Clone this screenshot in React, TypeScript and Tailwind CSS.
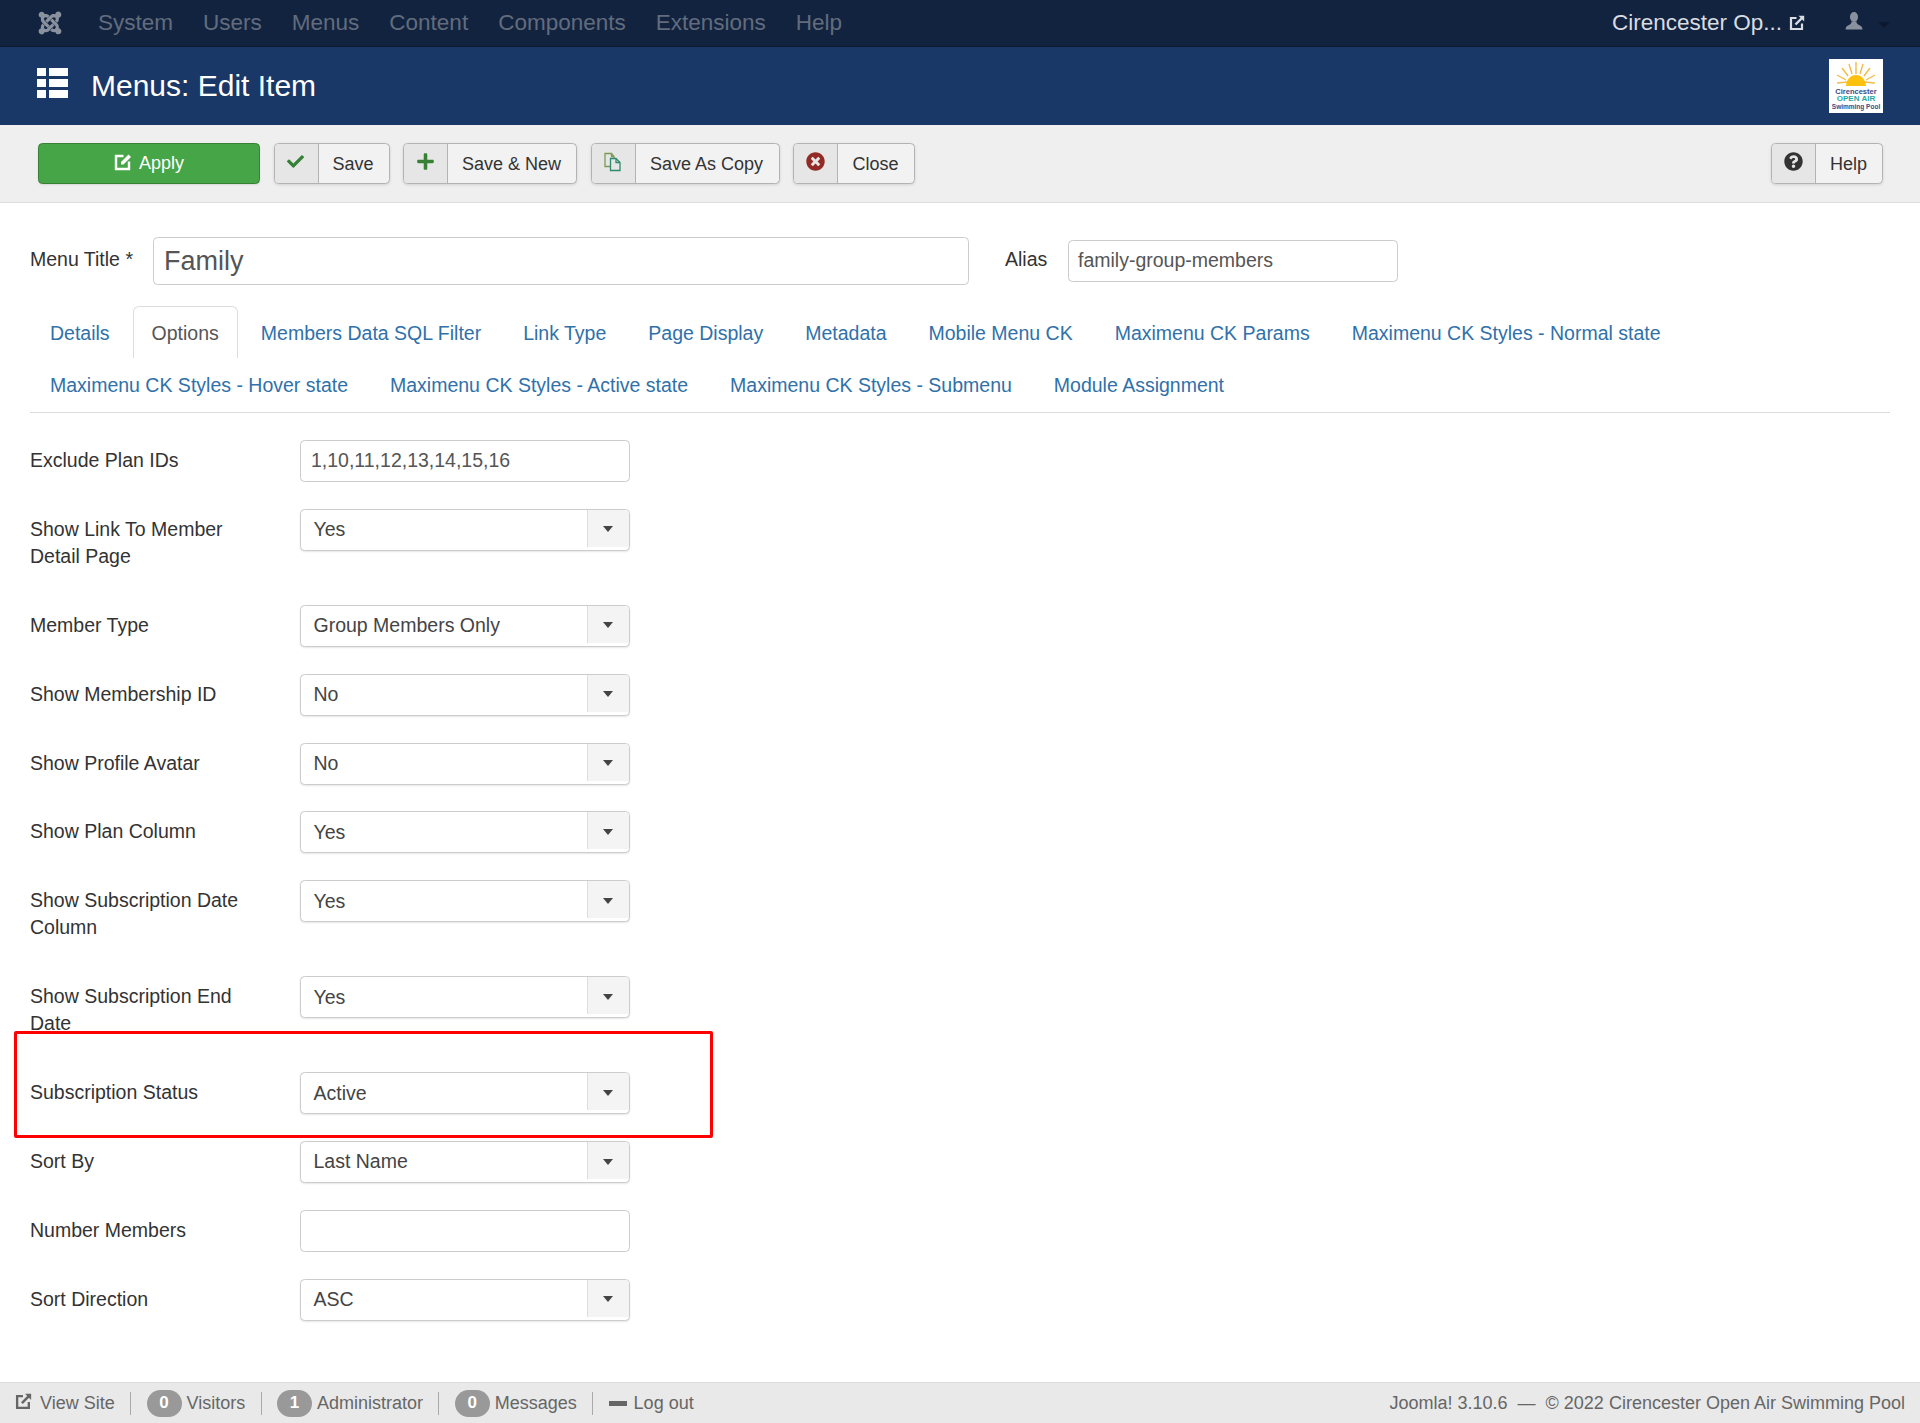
import React from "react";
import { FaJoomla, FaCheck, FaPlus, FaTimesCircle, FaQuestionCircle } from "react-icons/fa";

function ExtLink({ className }: { className?: string }) {
  return (
    <svg viewBox="0 0 16 16" className={className} fill="none" stroke="currentColor">
      <path d="M7.5 3H2v11h11V8.5" strokeWidth="2.2" />
      <path d="M6.5 9.5 13 3" strokeWidth="2.4" />
      <path d="M9.5 0.8H15.2V6.5Z" fill="currentColor" stroke="none" />
    </svg>
  );
}

function EditIcon({ className }: { className?: string }) {
  return (
    <svg viewBox="0 0 18 18" className={className} fill="none" stroke="currentColor">
      <path d="M9.5 3H2v13h13V8.5" strokeWidth="2.4" />
      <path d="M7 11.5v-2.5l7.5-7.5 2.5 2.5-7.5 7.5z" fill="currentColor" stroke="none" />
    </svg>
  );
}

function UserIcon({ className }: { className?: string }) {
  return (
    <svg viewBox="0 0 18 18" className={className} fill="currentColor">
      <ellipse cx="9" cy="5" rx="4" ry="5" />
      <path d="M6.5 9.5c0 1.5-.5 2.5-2 3.2C2.5 13.6.5 14.5.5 17.5h17c0-3-2-3.9-4-4.8-1.5-.7-2-1.7-2-3.2z" />
    </svg>
  );
}

function CopyIcon() {
  return (
    <svg viewBox="0 0 20 20" className="h-[20px] w-[20px]" fill="none" strokeWidth="1.3">
      <path d="M2 1.5h6.5l2.5 3v10H2z" stroke="#7e9a52" />
      <path d="M8.5 1.5v3H11" stroke="#7e9a52" />
      <path d="M7.5 6.5h5.5l4 4v8H7.5z" fill="#e6e6e6" stroke="#2e8a6c" />
      <path d="M13 6.5v4h4" stroke="#2e8a6c" />
    </svg>
  );
}

function ToolButton({ icon, label, w }: { icon: React.ReactNode; label: string; w: string }) {
  return (
    <button className={`flex h-[41px] items-stretch overflow-hidden rounded-[4.5px] border border-[#b3b3b3] bg-[#f2f2f2] text-[18px] leading-none text-[#333] shadow-[0_1px_3px_rgba(0,0,0,0.12)] ${w}`}>
      <span className="flex w-[44px] shrink-0 items-center justify-center border-r border-[#b3b3b3] bg-[#e6e6e6] pb-[3px] pr-[1px]">{icon}</span>
      <span className="flex flex-1 items-center justify-center pr-[1px] pt-[1px]">{label}</span>
    </button>
  );
}

function Field({ label, value, select = false }: { label: string; value?: string; select?: boolean }) {
  return (
    <div className="mb-[26.9px] flex items-start">
      <div className="w-[270px] shrink-0 pt-[7px] pb-[8px] pr-[30px] text-[19.5px] leading-[27px] text-[#333]">{label}</div>
      {select ? (
        <div className="flex h-[42px] w-[330px] items-stretch overflow-hidden rounded-[4.5px] border border-[#ccc] bg-white text-[19.5px] text-[#444] shadow-[0_1px_2px_rgba(0,0,0,0.1)]">
          <span className="flex flex-1 items-center pl-[12.5px]">{value}</span>
          <span className="mb-[3px] flex w-[42.5px] items-center justify-center border-l border-[#ddd] bg-[#f4f4f4]">
            <span className="mt-[2px] h-0 w-0 border-x-[5.5px] border-t-[6px] border-x-transparent border-t-[#444]" />
          </span>
        </div>
      ) : (
        <div className="flex h-[42px] w-[330px] items-center rounded-[4.5px] border border-[#ccc] bg-white pl-[10px] text-[19.5px] text-[#555]">{value}</div>
      )}
    </div>
  );
}

function Badge({ n }: { n: number }) {
  return <span className="flex h-[27px] w-[35px] items-center justify-center rounded-full bg-[#999] text-[17px] font-bold text-white">{n}</span>;
}
function Sep() {
  return <span className="mx-[15.4px] h-[23px] w-px bg-[#aaa]" />;
}

const row1 = ["Members Data SQL Filter", "Link Type", "Page Display", "Metadata", "Mobile Menu CK", "Maximenu CK Params", "Maximenu CK Styles - Normal state"];
const row2 = ["Maximenu CK Styles - Hover state", "Maximenu CK Styles - Active state", "Maximenu CK Styles - Submenu", "Module Assignment"];
const nav = ["System", "Users", "Menus", "Content", "Components", "Extensions", "Help"];

function Tab({ label, active = false }: { label: string; active?: boolean }) {
  return (
    <a className={`mr-[4px] block rounded-t-[6px] border border-b-0 px-[18px] pt-[13px] pb-[11px] leading-[27px] ${active ? "border-[#ddd] bg-white text-[#555]" : "border-transparent text-[#3071a9]"}`}>
      {label}
    </a>
  );
}

export default function App() {
  return (
    <div className="relative flex min-h-screen flex-col bg-white font-['Liberation_Sans',Arial,sans-serif]">
      <header className="flex h-[47px] items-center border-b border-[#0d1a30] bg-[#12233f] pl-[37px] pr-[30px] text-[22.5px]">
        <FaJoomla className="mr-[20px] h-[26px] w-[26px] text-[#8a919e]" />
        {nav.map((n) => (
          <span key={n} className="px-[15px] text-[#626c7d]">{n}</span>
        ))}
        <span className="ml-auto text-[#d9dce1]">Cirencester Op...</span>
        <ExtLink className="ml-[7px] h-[16px] w-[16px] text-[#d9dce1]" />
        <UserIcon className="ml-[40px] mb-[4px] h-[18px] w-[18px] text-[#8a919e]" />
        <span className="ml-[15px] mt-[3px] h-0 w-0 border-x-[6px] border-t-[6px] border-x-transparent border-t-[#0c1830]" />
      </header>

      <div className="flex h-[78px] items-center bg-[#1a3867] pl-[37px] pr-[37px]">
        <div className="mb-[6px] grid h-[31px] w-[31px] grid-cols-[9px_19px] grid-rows-3 gap-[3px]">
          <i className="bg-white" /><i className="bg-white" />
          <i className="bg-white" /><i className="bg-white" />
          <i className="bg-white" /><i className="bg-white" />
        </div>
        <h1 className="mb-[1px] ml-[23px] text-[30px] font-normal text-white">Menus: Edit Item</h1>
        <div className="ml-auto flex h-[54px] w-[54px] flex-col items-center bg-white">
          <svg viewBox="0 0 54 29" className="h-[29px] w-[54px] shrink-0">
            <g stroke="#f2bc47" strokeWidth="1.4">
              <path d="M27 3v12M20 5l3 10M34 5l-3 10M13 9l6 8M41 9l-6 8M8 16l9 5M46 16l-9 5M8 24l11-1M46 24l-11-1" />
            </g>
            <path d="M17 27a10 11 0 0 1 20 0z" fill="#fdc20e" />
          </svg>
          <span className="text-[7.5px] font-bold leading-[7px] text-[#3a4a86]">Cirencester</span>
          <span className="text-[8px] font-bold leading-[8px] text-[#27a9a4]">OPEN AIR</span>
          <span className="text-[6.5px] font-bold leading-[7px] text-[#3a4a86]">Swimming Pool</span>
        </div>
      </div>

      <div className="flex h-[78px] items-center gap-[13.5px] border-b border-[#ddd] bg-[#efefef] pl-[38px] pr-[37px] pb-[1px]">
        <button className="flex h-[41px] w-[222px] items-center justify-center gap-[7px] rounded-[4.5px] border border-[#378137] bg-[#46a546] pt-[1px] text-[18px] text-white shadow-[0_1px_2px_rgba(0,0,0,0.1)]">
          <EditIcon className="mb-[3px] h-[18px] w-[18px]" />Apply
        </button>
        <ToolButton w="w-[116px]" label="Save" icon={<FaCheck className="h-[17px] w-[17px] text-[#378137]" />} />
        <ToolButton w="w-[174px]" label="Save & New" icon={<FaPlus className="h-[19px] w-[19px] text-[#378137]" />} />
        <ToolButton w="w-[189px]" label="Save As Copy" icon={<CopyIcon />} />
        <ToolButton w="w-[122px]" label="Close" icon={<FaTimesCircle className="h-[19px] w-[19px] text-[#942a25]" />} />
        <div className="ml-auto">
          <ToolButton w="w-[112px]" label="Help" icon={<FaQuestionCircle className="h-[19px] w-[19px] text-[#333]" />} />
        </div>
      </div>

      <main className="px-[30px] pt-[34px] text-[19.5px]">
        <div className="mb-[21px] flex items-center">
          <label className="mb-[2px] w-[123px] text-[#333]">Menu Title *</label>
          <div className="flex h-[48px] w-[816px] items-center rounded-[4.5px] border border-[#ccc] pl-[10px] text-[27px] text-[#555]">Family</div>
          <label className="mb-[2px] ml-[36px] w-[63px] text-[#333]">Alias</label>
          <div className="flex h-[42px] w-[330px] items-center rounded-[4.5px] border border-[#ccc] pl-[9px] text-[#555]">family-group-members</div>
        </div>

        <nav className="mb-[27px] border-b border-[#ddd] pb-[2px] pl-[1px]">
          <div className="flex">
            <Tab label="Details" />
            <Tab label="Options" active />
            {row1.map((t) => <Tab key={t} label={t} />)}
          </div>
          <div className="flex">
            {row2.map((t) => <Tab key={t} label={t} />)}
          </div>
        </nav>

        <Field label="Exclude Plan IDs" value="1,10,11,12,13,14,15,16" />
        <Field label="Show Link To Member Detail Page" value="Yes" select />
        <Field label="Member Type" value="Group Members Only" select />
        <Field label="Show Membership ID" value="No" select />
        <Field label="Show Profile Avatar" value="No" select />
        <Field label="Show Plan Column" value="Yes" select />
        <Field label="Show Subscription Date Column" value="Yes" select />
        <Field label="Show Subscription End Date" value="Yes" select />
        <Field label="Subscription Status" value="Active" select />
        <Field label="Sort By" value="Last Name" select />
        <Field label="Number Members" />
        <Field label="Sort Direction" value="ASC" select />
      </main>

      <footer className="mt-auto flex h-[41px] items-center border-t border-[#ddd] bg-[#e9e9e9] pl-[15px] pr-[15px] text-[18px] text-[#666]">
        <ExtLink className="mr-[8px] mb-[4px] h-[17px] w-[17px]" />
        <span>View Site</span>
        <Sep />
        <Badge n={0} /><span className="ml-[5px]">Visitors</span>
        <Sep />
        <Badge n={1} /><span className="ml-[5px]">Administrator</span>
        <Sep />
        <Badge n={0} /><span className="ml-[5px]">Messages</span>
        <Sep />
        <span className="mr-[7px] h-[5px] w-[18px] bg-[#666]" /><span>Log out</span>
        <span className="ml-auto">Joomla! 3.10.6 &nbsp;—&nbsp; © 2022 Cirencester Open Air Swimming Pool</span>
      </footer>

      <div className="pointer-events-none absolute left-[14px] top-[1031px] h-[107px] w-[699px] rounded-[2px] border-[3px] border-[#f00]" />
    </div>
  );
}
